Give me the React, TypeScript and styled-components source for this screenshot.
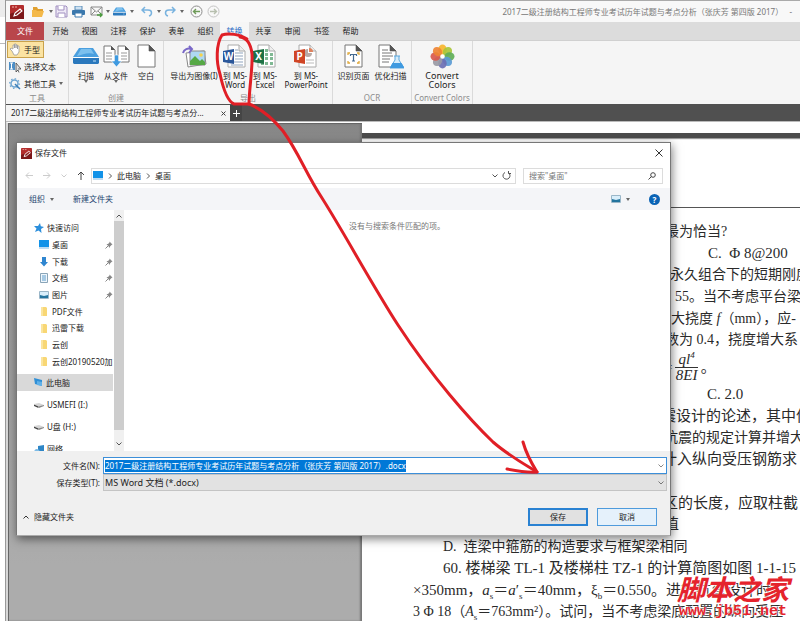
import React from "react";
import styled, { createGlobalStyle } from "styled-components";

const Global = createGlobalStyle`
  * { box-sizing: border-box; }
  body {
    margin: 0;
    overflow: hidden;
    font-family: "Noto Sans", "Noto Sans CJK SC", sans-serif;
    font-size: 8px;
    line-height: 10px;
    color: #222;
  }
  button, input, select { font: inherit; color: inherit; margin: 0; padding: 0; border: 0; background: none; }
  svg { display: block; flex: none; }
`;

/* ---------- window ---------- */

const Desktop = styled.div`
  display: flex;
  min-height: 100vh;
  height: 100vh;
  overflow: hidden;
  background: #fff;
`;
const Gutter = styled.div`
  flex: none;
  width: 6px;
  border-right: 1px solid #999;
  background: linear-gradient(#ececec 0 17px, #fff 17px 43px, #bbb 43px 44px, #fff 44px);
`;
const Window = styled.div`
  flex: 1;
  min-width: 0;
  display: flex;
  flex-direction: column;
  position: relative;
`;
const TitleBar = styled.header`
  display: flex;
  align-items: center;
  height: 22px;
  padding: 0 0 0 4px;
  border-top: 1px solid #aaa;
  background: #f8f8f8;
`;
const QuickTools = styled.div`
  display: flex;
  align-items: center;
`;
const QuickButton = styled.button<{ $w: number }>`
  display: flex;
  align-items: center;
  width: ${(p) => p.$w}px;
  height: 16px;
`;
const WindowTitle = styled.h1`
  flex: 1;
  margin: 0;
  padding-right: 8px;
  font-size: 8px;
  font-weight: 400;
  color: #777;
  text-align: right;
  white-space: pre;
`;

/* ---------- ribbon ---------- */

const TabBar = styled.nav`
  display: flex;
  height: 18px;
  background: #dcdcdc;
`;
const FileTab = styled.button`
  width: 38px;
  margin-right: 2px;
  background: #b9464b;
  color: #fff;
`;
const Tab = styled.button<{ $active?: boolean }>`
  width: 29px;
  color: ${(p) => (p.$active ? "#2b6cc4" : "#222")};
  background: ${(p) => (p.$active ? "#f6f6f6" : "transparent")};
`;
const Ribbon = styled.div`
  display: flex;
  height: 64px;
  background: #f5f5f5;
  border-top: 1px solid #d0d0d0;
`;
const Group = styled.section<{ $w: number }>`
  width: ${(p) => p.$w}px;
  display: flex;
  flex-direction: column;
  border-right: 1px solid #dadada;
`;
const GroupBody = styled.div<{ $stack?: boolean; $end?: boolean }>`
  flex: 1;
  display: flex;
  flex-direction: ${(p) => (p.$stack ? "column" : "row")};
  justify-content: ${(p) => (p.$stack ? "flex-start" : p.$end ? "flex-end" : "center")};
`;
const GroupName = styled.div`
  height: 11px;
  line-height: 10px;
  color: #8c8c8c;
  text-align: center;
  white-space: nowrap;
`;
const SmallTool = styled.button<{ $on?: boolean }>`
  display: flex;
  align-items: center;
  gap: 3px;
  height: 17px;
  width: ${(p) => (p.$on ? "37px" : "60px")};
  padding: 0 2px;
  white-space: nowrap;
  margin-left: 1px;
  outline: ${(p) => (p.$on ? "1px solid #c9a24c" : "none")};
  outline-offset: -1px;
  background: ${(p) => (p.$on ? "#fbe3a2" : "transparent")};
`;
const BigTool = styled.button<{ $w: number }>`
  width: ${(p) => p.$w}px;
  display: flex;
  flex-direction: column;
  align-items: center;
  padding-top: 3px;
`;
const BigIcon = styled.span`
  display: flex;
  align-items: center;
  justify-content: center;
  height: 24px;
  margin-bottom: 3px;
`;
const BigLabel = styled.span<{ $large?: boolean }>`
  font-size: ${(p) => (p.$large ? 9 : 8)}px;
  line-height: 9px;
  white-space: pre;
  text-align: center;
`;

/* ---------- document area ---------- */

const DocTabs = styled.div`
  display: flex;
  height: 18px;
  padding-top: 1px;
  background: #505050;
  border-bottom: 1px solid #bbb;
`;
const DocTab = styled.div`
  display: flex;
  align-items: center;
  justify-content: space-between;
  width: 224px;
  padding: 0 4px 0 5px;
  background: #f4f4f4;
  white-space: nowrap;
`;
const CloseTab = styled.button`
  display: flex;
`;
const AddTab = styled.button`
  display: flex;
  align-items: center;
  justify-content: center;
  width: 12px;
  background: #454545;
`;
const Workspace = styled.main`
  flex: 1;
  min-height: 0;
  display: flex;
  border-top: 1px solid #fff;
  border-left: 2px solid #d8d8d8;
`;
const Canvas = styled.div`
  flex: none;
  width: 354px;
  border-left: 1px solid #666;
  border-top: 1px solid #666;
  background: linear-gradient(#868686, #8e8e8e 40px, #acacac 440px);
  box-shadow: inset -2px 0 2px #777;
`;
const Pages = styled.div`
  flex: 1;
  min-width: 0;
  background: #fff;
  overflow: hidden;
`;
const PageGap = styled.div`
  margin-top: 10px;
  height: 5px;
  background: #4c4c4c;
  box-shadow: 0 1px 1px #999;
`;
const PageHeader = styled.div`
  height: 70px;
  margin-bottom: 13px;
  border-bottom: 1px solid #555;
`;
const Lines = styled.div<{ $h: number }>`
  display: grid;
  grid-auto-rows: 1fr;
  height: ${(p) => p.$h}px;
`;
const Line = styled.div<{ $indent: number; $small?: boolean }>`
  padding-left: ${(p) => p.$indent}px;
  font-family: "Liberation Serif", "Noto Sans CJK SC", serif;
  font-size: ${(p) => (p.$small ? 14 : 15)}px;
  line-height: 21px;
  color: #2a2a2a;
  white-space: pre;
  sub, sup { font-size: 9px; line-height: 0; }
`;
const Equation = styled(Line)`
  display: flex;
  align-items: center;
  height: 33px;
  gap: 3px;
`;
const Fraction = styled.span`
  display: inline-flex;
  flex-direction: column;
  align-items: center;
  font-style: italic;
  line-height: 15px;
  span:first-child { border-bottom: 1px solid #333; padding: 0 3px; }
`;

/* ---------- save dialog ---------- */

const Dialog = styled.section`
  position: absolute;
  left: 10px;
  top: 142px;
  width: 655px;
  display: flex;
  flex-direction: column;
  background: #fff;
  border: 1px solid #777;
  border-bottom-color: #aaa;
  box-shadow: 1px 3px 9px rgba(0, 0, 0, 0.5);
`;
const DialogTitle = styled.header`
  display: flex;
  align-items: center;
  gap: 3px;
  height: 20px;
  padding: 0 7px 0 4px;
  h2 { flex: 1; margin: 0; font-size: 8px; font-weight: 400; }
`;
const PlainButton = styled.button`
  display: flex;
  align-items: center;
  gap: 5px;
`;
const NavRow = styled.div`
  display: flex;
  align-items: center;
  height: 25px;
  padding: 0 7px 0 8px;
`;
const Arrows = styled.div`
  display: flex;
  align-items: center;
  gap: 10px;
  width: 66px;
`;
const AddressBar = styled.div`
  flex: 1;
  display: flex;
  align-items: center;
  gap: 4px;
  height: 16px;
  padding: 0 4px 0 1px;
  border: 1px solid #dcdcdc;
`;
const Spacer = styled.div`
  flex: 1;
`;
const SearchBox = styled.label`
  display: flex;
  align-items: center;
  width: 140px;
  height: 16px;
  margin-left: 7px;
  padding: 0 6px 0 5px;
  border: 1px solid #dcdcdc;
  input { flex: 1; min-width: 0; outline: none; }
  input::placeholder { color: #777; }
`;
const CommandBar = styled.div`
  display: flex;
  align-items: center;
  height: 22px;
  padding: 0 10px 0 12px;
  gap: 19px;
  background: #f4f5f8;
  color: #23446e;
`;
const Browser = styled.div`
  display: flex;
  height: 241px;
`;
const Tree = styled.div`
  width: 97px;
  padding-top: 10px;
  overflow: hidden;
  border-right: 1px solid #fff;
`;
const QuickList = styled.div`
  display: grid;
  grid-auto-rows: 1fr;
  height: 150px;
  margin-bottom: 4px;
`;
const TreeItem = styled.div<{ $level?: number; $h?: number; $on?: boolean }>`
  display: flex;
  align-items: center;
  gap: 3px;
  height: ${(p) => (p.$h ? `${p.$h}px` : "auto")};
  padding-left: ${(p) => (p.$level === 2 ? 22 : 17)}px;
  padding-right: 2px;
  white-space: nowrap;
  background: ${(p) => (p.$on ? "#d9d9d9" : "transparent")};
  span { flex: 1; overflow: hidden; }
`;
const Drives = styled.div`
  padding-top: 3px;
`;
const ScrollBar = styled.div`
  display: flex;
  flex-direction: column;
  width: 10px;
  background: #f0f0f0;
`;
const ScrollStep = styled.button<{ $h: number }>`
  display: flex;
  align-items: center;
  justify-content: center;
  height: ${(p) => p.$h}px;
`;
const Thumb = styled.div`
  height: 209px;
  background: #cdcdcd;
`;
const FileList = styled.div`
  flex: 1;
  padding-top: 11px;
  text-align: center;
  color: #777;
`;
const Footer = styled.footer`
  background: #f0f0f0;
  padding: 6px 3px 2px 0;
`;
const Field = styled.div`
  display: flex;
  align-items: center;
  label { width: 86px; padding-right: 3px; text-align: right; }
`;
const Combo = styled.div<{ $on?: boolean }>`
  flex: 1;
  display: flex;
  align-items: center;
  height: 17px;
  padding: 0 2px 0 1px;
  border: 1px solid ${(p) => (p.$on ? "#3c8fd9" : "#c4c4c4")};
  background: ${(p) => (p.$on ? "#fff" : "#e2e2e2")};
`;
const NameInput = styled.input`
  field-sizing: content;
  height: 12px;
  background: #0078d7;
  color: #fff;
  outline: none;
`;
const TypeSelect = styled.select`
  flex: 1;
  appearance: none;
  outline: none;
  font-size: 9px;
`;
const Actions = styled.div`
  display: flex;
  align-items: center;
  gap: 9px;
  margin-top: 17px;
  padding: 0 10px 7px 6px;
`;
const ActionButton = styled.button<{ $primary?: boolean }>`
  width: 60px;
  height: 18px;
  border: ${(p) => (p.$primary ? "2px solid #2a82d2" : "1px solid #4f9bdc")};
  background: ${(p) => (p.$primary ? "#e1e1e1" : "#e5f1fb")};
`;

/* ---------- overlays ---------- */

const Watermark = styled.div`
  position: absolute;
  right: 11px;
  top: 572px;
  color: #e5232c;
  text-shadow: 0 0 2px #fff, 0 0 2px #fff;
  text-align: center;
`;
const Brand = styled.div`
  font-family: "Noto Sans CJK SC", sans-serif;
  font-size: 28px;
  font-weight: 700;
  font-style: italic;
  line-height: 32px;
`;
const Site = styled.div`
  font-family: "Liberation Mono", monospace;
  font-size: 15px;
  font-weight: 700;
  line-height: 15px;
`;
const Ink = styled.svg`
  position: absolute;
  left: 0;
  top: 0;
  pointer-events: none;
`;

/* ---------- icons ---------- */

const AppIcon = ({ s }: { s: number }) => (
  <svg width={s} height={s} viewBox="0 0 14 14">
    <rect width="14" height="14" rx="1" fill="#b22c2c" />
    <path d="M0 9C4 6 7 9 14 4v10H0z" fill="#7c1719" />
    <path d="M2 2h2M5 2h2" stroke="#f3b0a8" strokeWidth="1" />
    <path d="M4 11l1-3 5-4 2 2-5 4z" fill="none" stroke="#fff" strokeWidth="1.1" />
  </svg>
);
const FolderOpen = () => (
  <svg width="13" height="12" viewBox="0 0 13 12">
    <path d="M1 1h4l1 2h5v2H1z" fill="#e0a030" />
    <path d="M0 11V4h4l1 1h7l-2 6z" fill="#f4b94a" />
  </svg>
);
const Dot = () => (
  <svg width="4" height="3" viewBox="0 0 4 3"><path d="M0 0h4L2 3z" fill="#666" /></svg>
);
const Save = () => (
  <svg width="13" height="13" viewBox="0 0 13 13" fill="none" stroke="#a08fc0">
    <path d="M1 1h10l1 1v10H1z" fill="#eee9f6" />
    <path d="M3 1v4h6V1M3 12V8h7v4" fill="#fff" />
  </svg>
);
const Print = () => (
  <svg width="13" height="12" viewBox="0 0 13 12">
    <path d="M3 0h7v4H3z" fill="#cfe2f2" stroke="#5b8db8" />
    <rect y="4" width="13" height="5" rx="1" fill="#3b78ad" />
    <path d="M3 7h7v4H3z" fill="#fff" stroke="#3b78ad" />
  </svg>
);
const Mail = () => (
  <svg width="13" height="12" viewBox="0 0 13 12" fill="none">
    <path d="M1 1h11v8H1zM1 1l5.5 5L12 1M1 9l4-4M12 9L8 5" stroke="#8a8a8a" />
    <path d="M7 9h5M10 7l2 2-2 2" stroke="#4b9b3f" strokeWidth="1.3" />
  </svg>
);
const Scanner = ({ w }: { w: number }) => (
  <svg width={w} height={(w * 18) / 26} viewBox="0 0 26 18">
    <path d="M6 1h14l6 9H0z" fill="#4a9fdf" />
    <path d="M8 2h10l3 5c-6-2-12 1-17 2z" fill="#7cc0ee" />
    <path d="M0 11h26v5l-1 1H1l-1-1z" fill="#2b79bd" />
    <path d="M1 10.500h24" stroke="#fff" />
    <path d="M20 14h3" stroke="#bfe1f7" />
  </svg>
);
const Undo = ({ flip }: { flip?: boolean }) => (
  <svg width="12" height="11" viewBox="0 0 12 11" fill="none" stroke="#79b3df" strokeWidth="1.5">
    {flip ? <path d="M8 1l3 3-3 3M11 4H5C0 4 1 9 4 10" /> : <path d="M4 1L1 4l3 3M1 4h6c5 0 4 5 1 6" />}
  </svg>
);
const Circle = ({ flip }: { flip?: boolean }) => (
  <svg width="13" height="13" viewBox="0 0 13 13" fill="none" stroke={flip ? "#b7bfae" : "#6e9a58"}>
    <circle cx="6.5" cy="6.5" r="5.5" stroke={flip ? "#c4c4c4" : "#8d8d8d"} />
    {flip ? <path d="M3 6.500h6M7 4l2.500 2.500L7 9" strokeWidth="1.4" /> : <path d="M10 6.500H4M6 4L3.500 6.500 6 9" strokeWidth="1.4" />}
  </svg>
);
const Hand = () => (
  <svg width="12" height="13" viewBox="0 0 12 13">
    <path d="M3 8L1 6l1-1 2 1V2h1.500v3V1H7v4V2h1.500v4V3H10v6l-2 3H5z" fill="#fff" stroke="#999" strokeWidth=".8" />
  </svg>
);
const TextPick = () => (
  <svg width="12" height="12" viewBox="0 0 12 12">
    <rect y="1" width="6" height="8" fill="#4e8fc6" />
    <path d="M1 2h3M2.500 2v6M1 8h3" stroke="#fff" fill="none" />
    <path d="M7 2v9l2-2 1 2.500M7 2l5 6H9" fill="#ddd" stroke="#444" strokeWidth=".8" />
  </svg>
);
const Gear = () => (
  <svg width="12" height="12" viewBox="0 0 12 12" fill="none">
    <circle cx="5.5" cy="5.500" r="3.500" stroke="#6fa6d2" strokeWidth="1.500" />
    <circle cx="5.500" cy="5.500" r="4.800" stroke="#6fa6d2" strokeWidth="1.200" strokeDasharray="1.500 2.200" />
    <path d="M6 6l5 5" stroke="#3f7fb6" strokeWidth="1.500" />
  </svg>
);
const Sheet = ({ children }: { children?: React.ReactNode }) => (
  <g>
    <path d="M1 1h11l6 6v16h-17z" fill="#fff" stroke="#777" />
    <path d="M12 1v6h6z" fill="#555" stroke="#555" strokeWidth=".6" />
    {children}
  </g>
);
const FromFile = () => (
  <svg width="27" height="24" viewBox="0 0 27 24">
    <path d="M1 2h7l4 4v12H1zM15 2h7l4 4v12H15z" fill="#fff" stroke="#777" />
    <path d="M8 2v4h4zM22 2v4h4z" fill="#555" />
    <path d="M3 9h6M3 12h6M3 15h6M18 9h6M18 12h6M18 15h6" stroke="#999" />
    <path d="M11.500 11h4v6h3l-5 6-5-6h3z" fill="#3f9ae0" stroke="#fff" strokeWidth=".6" />
  </svg>
);
const Blank = () => (
  <svg width="19" height="24" viewBox="0 0 19 24"><Sheet /></svg>
);
const ExportImage = () => (
  <svg width="25" height="23" viewBox="0 0 25 23">
    <path d="M4 8l18-2 2 13-18 3z" fill="#fff" stroke="#888" />
    <path d="M8 6h15v14H8z" fill="#aed8f4" stroke="#8a8a8a" />
    <path d="M8 20v-4l5-5 5 5 2-2 3 3v3z" fill="#56a845" />
    <circle cx="19" cy="10" r="1.800" fill="#f7d24a" />
    <path d="M1 8c1-4 5-5 8-4M7 1l3 3-3 4" fill="none" stroke="#7a68c8" strokeWidth="2" />
  </svg>
);
const Office = ({ color, letter }: { color: string; letter: string }) => (
  <svg width="24" height="24" viewBox="0 0 24 24">
    <path d="M5 1h11l6 6v16H5z" fill="#fff" stroke="#aaa" />
    <path d="M16 1v6h6" fill="#eee" stroke="#aaa" />
    {letter === "W" && <path d="M12 6h3M12 9h8M12 12h8M12 15h8M8 18h12M8 21h12" stroke="#8fa3bd" />}
    {letter === "X" && <path d="M12 5h3v3h-3zM12 9h3v3h-3zM17 9h3v3h-3zM12 13h3v3h-3zM17 13h3v3h-3zM8 18h3v3H8zM12 18h3v3h-3zM17 18h3v3h-3z" fill="#7fb893" />}
    {letter === "P" && (
      <g>
        <path d="M14 5a4 4 0 1 0 4 4h-4z" fill="#b8aaa6" />
        <path d="M15 8V4a4 4 0 0 1 4 4z" fill="#e0815c" />
        <path d="M12 16h8M12 19h8" stroke="#bbb" />
      </g>
    )}
    <path d="M0 7l11-2v15L0 18z" fill={color} />
    <text x="5.500" y="16" fontSize="10" fontWeight="700" fill="#fff" textAnchor="middle">{letter}</text>
  </svg>
);
const OcrPage = () => (
  <svg width="19" height="24" viewBox="0 0 19 24">
    <Sheet>
      <path d="M4 11V9h2M13 9h2v2M15 17v2h-2M6 19H4v-2" fill="none" stroke="#e0a93a" strokeWidth="1.300" />
      <path d="M6.500 12v-1.500h6V12M9.500 10.500V17M8 17h3" fill="none" stroke="#44698f" strokeWidth="1.200" />
    </Sheet>
  </svg>
);
const OptimizeScan = () => (
  <svg width="26" height="25" viewBox="0 0 26 25">
    <Sheet><path d="M4 6h6M4 9h10M4 12h11M4 15h8M4 18h7" stroke="#777" /></Sheet>
    <path d="M16 12h6M17 12v4l-5 8h14l-5-8v-4" fill="#d6ecfa" stroke="#5ba8df" />
    <path d="M14.500 19h9l3 5H12z" fill="#3f9ae0" />
  </svg>
);
const petals = ["#f7b52c", "#a9c53a", "#5fae57", "#5b9bd5", "#6b6fb3", "#999aa5", "#d9594c", "#ee8434"];
const Petals = () => (
  <svg width="25" height="25" viewBox="0 0 25 25">
    {petals.map((c, i) => (
      <ellipse key={c} cx="12.500" cy="5.500" rx="4.200" ry="5" fill={c} opacity=".92" transform={`rotate(${i * 45} 12.500 12.500)`} />
    ))}
    <circle cx="12.500" cy="12.500" r="2" fill="#fff" />
  </svg>
);
const Monitor = () => (
  <svg width="10" height="9" viewBox="0 0 10 9">
    <rect width="10" height="7" fill="#1192e8" /><path d="M0 8h10" stroke="#7db9e6" />
  </svg>
);
const Chevron = ({ d, c = "#555" }: { d: "up" | "down" | "right"; c?: string }) => (
  <svg width="6" height="6" viewBox="0 0 6 6" fill="none" stroke={c}>
    <path d={d === "up" ? "M.5 4.500L3 2l2.500 2.500" : d === "down" ? "M.5 1.500L3 4l2.500-2.500" : "M2 .5L4.500 3 2 5.500"} />
  </svg>
);
const Arrow = ({ d, c }: { d: string; c: string }) => (
  <svg width="8" height="9" viewBox="0 0 8 9" fill="none" stroke={c}><path d={d} /></svg>
);
const Star = () => (
  <svg width="10" height="10" viewBox="0 0 10 10"><path d="M6 0l.8 3.200L10 4 7 6l.5 4-3-2.500L1 9l1.500-3.500L0 3h4z" fill="#2c8fdc" /></svg>
);
const Down = () => (
  <svg width="10" height="10" viewBox="0 0 10 10"><path d="M3 0h4v5h2L5 9.500 1 5h2z" fill="#2f86d0" /></svg>
);
const DocIcon = () => (
  <svg width="10" height="10" viewBox="0 0 10 10"><path d="M1.500.5h7v9h-7z" fill="#eef6fc" stroke="#8aa5b8" /><path d="M3 3h4M3 5h4M3 7h4" stroke="#5c9ccb" /></svg>
);
const Picture = () => (
  <svg width="10" height="8" viewBox="0 0 10 8"><path d="M.5.5h9v7h-9z" fill="#d8eefb" stroke="#9ab6c8" /><path d="M1 4l4 1 4-1v3H1z" fill="#23749e" /></svg>
);
const Folder = () => (
  <svg width="10" height="9" viewBox="0 0 10 9"><path d="M2 0h5l1 1v8H2z" fill="#f8d775" /><path d="M2 0h2v9H2z" fill="#fbe59f" /></svg>
);
const Pin = () => (
  <svg width="8" height="8" viewBox="0 0 8 8"><path d="M4.500.5l3 3-1 .5-1.500 1.500V7L1.500 3h1.500L4.500 1.500z" fill="#888" /><path d="M3 5L.5 7.500" stroke="#888" /></svg>
);
const Pc = () => (
  <svg width="9" height="9" viewBox="0 0 9 9"><path d="M0 0l8 2v6L1 6z" fill="#2f8fd6" /><path d="M3 3l5 1v4l-5-1z" fill="#5fb0e8" /></svg>
);
const Drive = () => (
  <svg width="10" height="6" viewBox="0 0 10 6"><path d="M0 2l5-1 5 2-5 2z" fill="#d4d4d4" /><path d="M0 2.500l4.500 2V6L0 4z" fill="#444" /><path d="M4.500 4.500L10 3v1L5 6z" fill="#888" /></svg>
);
const Network = () => (
  <svg width="10" height="9" viewBox="0 0 10 9"><path d="M4 1l6-1v8L4 7z" fill="#2f86c6" /><path d="M0 8c0-4 3-5 5-3l2 3z" fill="#7fbce6" /></svg>
);

/* ---------- data ---------- */

const tabs = ["开始", "视图", "注释", "保护", "表单", "组织", "转换", "共享", "审阅", "书签", "帮助"];
const fileTitle = "2017二级注册结构工程师专业考试历年试题与考点分析（张庆芳 第四版 2017）";
const quick: { name: string; icon: React.ReactNode; pin?: boolean }[] = [
  { name: "桌面", icon: <Monitor />, pin: true },
  { name: "下载", icon: <Down />, pin: true },
  { name: "文档", icon: <DocIcon />, pin: true },
  { name: "图片", icon: <Picture />, pin: true },
  { name: "PDF文件", icon: <Folder /> },
  { name: "迅雷下载", icon: <Folder /> },
  { name: "云创", icon: <Folder /> },
  { name: "云创20190520加", icon: <Folder /> },
];
const quickTools: [string, number, React.ReactNode][] = [
  ["应用", 22, <AppIcon s={14} />],
  ["打开", 17, <FolderOpen />],
  ["打开选项", 6, <Dot />],
  ["保存", 17, <Save />],
  ["打印", 18, <Print />],
  ["邮件", 16, <Mail />],
  ["邮件选项", 7, <Dot />],
  ["扫描", 17, <Scanner w={13} />],
  ["扫描选项", 11, <Dot />],
  ["撤销", 16, <Undo />],
  ["撤销选项", 7, <Dot />],
  ["重做", 16, <Undo flip />],
  ["重做选项", 10, <Dot />],
  ["后退", 17, <Circle />],
  ["前进", 17, <Circle flip />],
];

const Big = ({ w, icon, label, menu, large }: { w: number; icon: React.ReactNode; label: string; menu?: boolean; large?: boolean }) => (
  <BigTool $w={w}>
    <BigIcon>{icon}</BigIcon>
    <BigLabel $large={large}>{label}</BigLabel>
    {menu && <Dot />}
  </BigTool>
);

const SaveDialog = () => (
  <Dialog role="dialog" aria-labelledby="dialog-title">
    <DialogTitle>
      <AppIcon s={11} />
      <h2 id="dialog-title">保存文件</h2>
      <PlainButton aria-label="关闭">
        <svg width="8" height="8" viewBox="0 0 8 8" stroke="#333"><path d="M.5.5l7 7M7.500.5l-7 7" /></svg>
      </PlainButton>
    </DialogTitle>
    <NavRow>
      <Arrows>
        <Arrow d="M8 4.500H1M4 1.500l-3 3 3 3" c="#ccc" />
        <Arrow d="M0 4.500h7M4 1.500l3 3-3 3" c="#ccc" />
        <Chevron d="down" c="#ccc" />
        <Arrow d="M4 9V1M1 4l3-3 3 3" c="#444" />
      </Arrows>
      <AddressBar>
        <Monitor />
        <Chevron d="right" />
        <span>此电脑</span>
        <Chevron d="right" />
        <span>桌面</span>
        <Spacer />
        <Chevron d="down" />
        <PlainButton aria-label="刷新">
          <svg width="9" height="9" viewBox="0 0 9 9" fill="none" stroke="#555"><path d="M3 1.500a3.500 3.500 0 1 0 3.500.3M6.500 0v2.500H9" /></svg>
        </PlainButton>
      </AddressBar>
      <SearchBox>
        <input aria-label="搜索" placeholder={'搜索"桌面"'} />
        <svg width="8" height="8" viewBox="0 0 8 8" fill="none" stroke="#444"><circle cx="5" cy="3" r="2.300" /><path d="M3.500 4.500L.5 7.500" /></svg>
      </SearchBox>
    </NavRow>
    <CommandBar>
      <PlainButton>组织 <Dot /></PlainButton>
      <PlainButton>新建文件夹</PlainButton>
      <Spacer />
      <PlainButton aria-label="视图"><Picture /><Dot /></PlainButton>
      <PlainButton aria-label="帮助">
        <svg width="11" height="11" viewBox="0 0 11 11">
          <circle cx="5.500" cy="5.500" r="5.500" fill="#0b63b5" />
          <text x="5.500" y="8.500" fontSize="8" fontWeight="700" fill="#fff" textAnchor="middle">?</text>
        </svg>
      </PlainButton>
    </CommandBar>
    <Browser>
      <Tree>
        <QuickList>
          <TreeItem><Star /><span>快速访问</span></TreeItem>
          {quick.map((q) => (
            <TreeItem key={q.name} $level={2}>{q.icon}<span>{q.name}</span>{q.pin && <Pin />}</TreeItem>
          ))}
        </QuickList>
        <TreeItem $h={17} $on><Pc /><span>此电脑</span></TreeItem>
        <Drives>
          <TreeItem $h={22}><Drive /><span>USMEFI (I:)</span></TreeItem>
          <TreeItem $h={22}><Drive /><span>U盘 (H:)</span></TreeItem>
          <TreeItem $h={22}><Network /><span>网络</span></TreeItem>
        </Drives>
      </Tree>
      <ScrollBar>
        <ScrollStep $h={11} aria-label="向上滚动"><Chevron d="up" /></ScrollStep>
        <Thumb />
        <Spacer />
        <ScrollStep $h={14} aria-label="向下滚动"><Chevron d="down" /></ScrollStep>
      </ScrollBar>
      <FileList>没有与搜索条件匹配的项。</FileList>
    </Browser>
    <Footer>
      <Field>
        <label htmlFor="file-name">文件名(N):</label>
        <Combo $on>
          <NameInput id="file-name" defaultValue={`${fileTitle}.docx`} />
          <Spacer />
          <Chevron d="down" c="#888" />
        </Combo>
      </Field>
      <Field>
        <label htmlFor="file-type">保存类型(T):</label>
        <Combo>
          <TypeSelect id="file-type"><option>MS Word 文档 (*.docx)</option></TypeSelect>
          <Chevron d="down" c="#777" />
        </Combo>
      </Field>
      <Actions>
        <PlainButton><Chevron d="up" c="#333" />隐藏文件夹</PlainButton>
        <Spacer />
        <ActionButton $primary>保存</ActionButton>
        <ActionButton>取消</ActionButton>
      </Actions>
    </Footer>
  </Dialog>
);

export default function App() {
  return (
    <Desktop>
      <Global />
      <Gutter />
      <Window>
        <TitleBar>
          <QuickTools>
            {quickTools.map(([name, w, icon]) => (
              <QuickButton key={name} $w={w} aria-label={name}>{icon}</QuickButton>
            ))}
          </QuickTools>
          <WindowTitle>{`${fileTitle}   -`}</WindowTitle>
        </TitleBar>
        <TabBar>
          <FileTab>文件</FileTab>
          {tabs.map((t) => <Tab key={t} $active={t === "转换"}>{t}</Tab>)}
        </TabBar>
        <Ribbon>
          <Group $w={63}>
            <GroupBody $stack>
              <SmallTool $on><Hand />手型</SmallTool>
              <SmallTool><TextPick />选择文本</SmallTool>
              <SmallTool><Gear />其他工具 <Dot /></SmallTool>
            </GroupBody>
            <GroupName>工具</GroupName>
          </Group>
          <Group $w={95}>
            <GroupBody>
              <Big w={30} icon={<Scanner w={26} />} label="扫描" menu />
              <Big w={30} icon={<FromFile />} label="从文件" menu />
              <Big w={30} icon={<Blank />} label="空白" />
            </GroupBody>
            <GroupName>创建</GroupName>
          </Group>
          <Group $w={169}>
            <GroupBody $end>
              <Big w={52} icon={<ExportImage />} label="导出为图像(I)" />
              <Big w={30} icon={<Office color="#2b579a" letter="W" />} label={"到 MS-\nWord"} />
              <Big w={30} icon={<Office color="#1e7145" letter="X" />} label={"到 MS-\nExcel"} />
              <Big w={52} icon={<Office color="#d04525" letter="P" />} label={"到 MS-\nPowerPoint"} />
            </GroupBody>
            <GroupName>导出</GroupName>
          </Group>
          <Group $w={79}>
            <GroupBody>
              <Big w={37} icon={<OcrPage />} label="识别页面" />
              <Big w={37} icon={<OptimizeScan />} label="优化扫描" />
            </GroupBody>
            <GroupName>OCR</GroupName>
          </Group>
          <Group $w={61}>
            <GroupBody>
              <Big w={58} icon={<Petals />} label={"Convert\nColors"} large />
            </GroupBody>
            <GroupName>Convert Colors</GroupName>
          </Group>
        </Ribbon>
        <DocTabs>
          <DocTab>
            <span>2017二级注册结构工程师专业考试历年试题与考点分...</span>
            <CloseTab aria-label="关闭标签">
              <svg width="5" height="5" viewBox="0 0 5 5" stroke="#444"><path d="M.5.5l4 4M4.500.5l-4 4" /></svg>
            </CloseTab>
          </DocTab>
          <AddTab aria-label="新建标签">
            <svg width="7" height="7" viewBox="0 0 7 7" stroke="#fff"><path d="M3.500 0v7M0 3.500h7" /></svg>
          </AddTab>
        </DocTabs>
        <Workspace>
          <Canvas />
          <Pages>
            <PageGap />
            <PageHeader />
            <Lines $h={130}>
              <Line $indent={303} $small>最为恰当?</Line>
              <Line $indent={346}>C.  Φ 8@200</Line>
              <Line $indent={308} $small>永久组合下的短期刚度</Line>
              <Line $indent={313} $small>55。当不考虑平台梁</Line>
              <Line $indent={309} $small>大挠度 <i>f</i>（mm），应-</Line>
              <Line $indent={303} $small>数为 0.4，挠度增大系</Line>
            </Lines>
            <Equation $indent={302}>
              <span>=</span>
              <Fraction><span>ql<sup>4</sup></span><span>8EI</span></Fraction>
              <span>。</span>
            </Equation>
            <Lines $h={239}>
              <Line $indent={345}>C. 2.0</Line>
              <Line $indent={299}>震设计的论述，其中何</Line>
              <Line $indent={302} $small>抗震的规定计算并增大</Line>
              <Line $indent={300}>计入纵向受压钢筋求</Line>
              <Line $indent={299}> </Line>
              <Line $indent={301}>区的长度，应取柱截</Line>
              <Line $indent={302}>值</Line>
              <Line $indent={81} $small>D.  连梁中箍筋的构造要求与框架梁相同</Line>
              <Line $indent={81}>60. 楼梯梁 TL-1 及楼梯柱 TZ-1 的计算简图如图 1-1-15</Line>
              <Line $indent={51}>×350mm，<i>a</i><sub>s</sub>＝<i>a</i>′<sub>s</sub>＝40mm，ξ<sub>b</sub>＝0.550。进行抗弯设计时，</Line>
              <Line $indent={51} $small>3 Φ 18（<i>A</i><sub>s</sub>＝763mm²）。试问，当不考虑梁底配置的纵向受压</Line>
            </Lines>
          </Pages>
        </Workspace>
        <SaveDialog />
        <Watermark>
          <Brand>脚本之家</Brand>
          <Site>www.jb51.net</Site>
        </Watermark>
        <Ink width="560" height="490" viewBox="6 0 560 490" fill="none" stroke="#e01f26" strokeWidth="3" strokeLinecap="round" strokeLinejoin="round">
          <path d="M247 39C240 34 228 33 222 35C216 44 216 62 220 74C223 88 227 101 234 104L249 104C249 90 253 66 252 54C251 45 247 38 240 37" />
          <path d="M249 104C262 109 274 120 283 131C299 153 305 172 322 198C346 236 371 283 398 325C432 377 470 420 493 442C508 455 524 464 537 472" />
          <path d="M523 442C526 453 532 464 537 472C528 473 517 471 507 469" />
        </Ink>
      </Window>
    </Desktop>
  );
}
